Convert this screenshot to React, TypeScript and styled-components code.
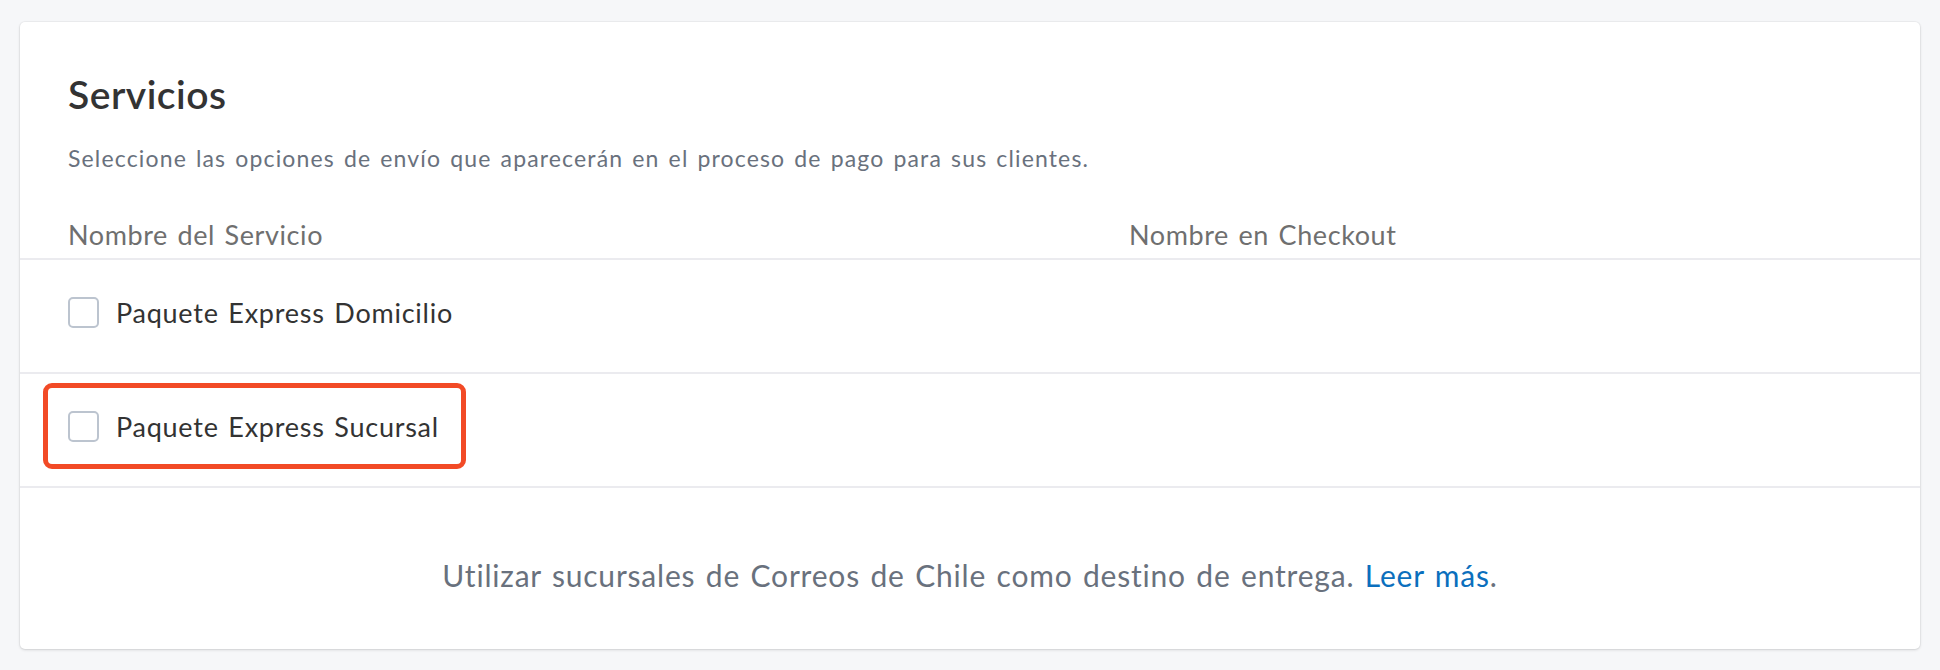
import React from "react";
import styled, { createGlobalStyle } from "styled-components";

const GlobalStyle = createGlobalStyle`
  html, body {
    margin: 0;
    padding: 0;
    background: #f6f7f9;
  }
  body {
    font-family: Lato, "Open Sans", sans-serif;
    -webkit-font-smoothing: antialiased;
  }
`;

type Service = {
  name: string;
  highlighted?: boolean;
};

const services: Service[] = [
  { name: "Paquete Express Domicilio" },
  { name: "Paquete Express Sucursal", highlighted: true },
];

const Page = styled.div`
  padding: 22px 20px;
`;

const Card = styled.section`
  background: #ffffff;
  border-radius: 5px;
  box-shadow: 0 1px 3px rgba(0, 0, 0, 0.14), 0 0 0 1px rgba(0, 0, 0, 0.03);
  padding-top: 53px;
`;

const Header = styled.div`
  padding: 0 48px;
`;

const Title = styled.h2`
  margin: 0;
  font-size: 39px;
  line-height: 39px;
  font-weight: 600;
  color: #333333;
  letter-spacing: 0.5px;
`;

const Description = styled.p`
  margin: 33px 0 0;
  font-size: 23px;
  line-height: 23px;
  color: #69717d;
  letter-spacing: 1.15px;
  word-spacing: 2px;
`;

const ColumnHeads = styled.div`
  display: grid;
  grid-template-columns: 1061px 1fr;
  margin-top: 51px;
  padding: 0 48px 10px;
  border-bottom: 2px solid #ebebef;
`;

const ColumnHead = styled.div`
  font-size: 27px;
  line-height: 27px;
  color: #6f6f6f;
  letter-spacing: 0.6px;
  word-spacing: 2px;
`;

const Row = styled.div`
  display: grid;
  grid-template-columns: 1061px 1fr;
  height: 114px;
  padding: 37px 48px 0;
  box-sizing: border-box;
  border-bottom: 2px solid #ebebef;
`;

const Option = styled.label<{ $highlighted?: boolean }>`
  position: relative;
  display: inline-flex;
  align-items: center;
  gap: 17px;
  align-self: start;
  justify-self: start;

  &::after {
    content: "";
    display: ${({ $highlighted }) => ($highlighted ? "block" : "none")};
    position: absolute;
    top: -28px;
    bottom: -27px;
    left: -25px;
    right: -27px;
    border: 5px solid #f24a26;
    border-radius: 9px;
    pointer-events: none;
  }
`;

const Box = styled.span`
  width: 31px;
  height: 31px;
  box-sizing: border-box;
  border: 2px solid #bcc4cf;
  border-radius: 5px;
  background: #ffffff;
  flex: none;
`;

const OptionName = styled.span`
  font-size: 27px;
  line-height: 31px;
  color: #333333;
  letter-spacing: 0.75px;
  word-spacing: 2px;
`;

const Footer = styled.p`
  margin: 0;
  padding: 72px 48px 59px;
  text-align: center;
  font-size: 30px;
  line-height: 30px;
  color: #69717d;
  letter-spacing: 0.8px;
  word-spacing: 2px;
`;

const Link = styled.a`
  color: #0b6fbd;
  text-decoration: none;
`;

export default function App() {
  return (
    <>
      <GlobalStyle />
      <Page>
        <Card>
          <Header>
            <Title>Servicios</Title>
            <Description>
              Seleccione las opciones de envío que aparecerán en el proceso de pago para sus clientes.
            </Description>
          </Header>
          <ColumnHeads>
            <ColumnHead>Nombre del Servicio</ColumnHead>
            <ColumnHead>Nombre en Checkout</ColumnHead>
          </ColumnHeads>
          {services.map((s) => (
            <Row key={s.name}>
              <Option $highlighted={s.highlighted}>
                <Box />
                <OptionName>{s.name}</OptionName>
              </Option>
              <div />
            </Row>
          ))}
          <Footer>
            Utilizar sucursales de Correos de Chile como destino de entrega. <Link href="#">Leer más</Link>.
          </Footer>
        </Card>
      </Page>
    </>
  );
}
